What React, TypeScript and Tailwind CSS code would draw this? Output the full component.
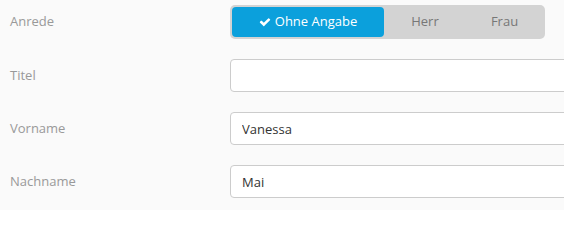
const font = { fontFamily: '"Open Sans", "Noto Sans", sans-serif' };

function CheckIcon() {
  return (
    <svg viewBox="0 0 1792 1792" className="h-[12px] w-[12px]" fill="currentColor">
      <path d="M1671 566q0 40-28 68l-724 724-136 136q-28 28-68 28t-68-28l-136-136-362-362q-28-28-28-68t28-68l136-136q28-28 68-28t68 28l294 295 656-657q28-28 68-28t68 28l136 136q28 28 28 68z" />
    </svg>
  );
}

function Row({ label, children, tall }: { label: string; children: React.ReactNode; tall?: boolean }) {
  return (
    <div className={tall ? 'flex h-[54px] items-center' : 'flex h-[53px] items-center'}>
      <div className="w-[230px] shrink-0 pl-[10px] text-[13px] text-[#999]">{label}</div>
      <div className="min-w-0 shrink-0">{children}</div>
    </div>
  );
}

function TextInput({ value }: { value: string }) {
  return (
    <input
      readOnly
      value={value}
      style={font}
      className="block h-[33px] w-[400px] rounded-[4px] border border-[#ccc] bg-white px-[11px] text-[13px] text-[#333] outline-none"
    />
  );
}

export default function App() {
  return (
    <div style={font} className="h-[210px] w-[564px] overflow-hidden bg-[#fafafa]">
      <div className="-mt-[5px]">
        <Row label="Anrede" tall>
          <div className="flex h-[34px] w-[315px] rounded-[5px] bg-[#d3d3d3] p-[2px] text-[13px]">
            <div className="flex w-[152px] items-center justify-center gap-[4px] rounded-[4px] bg-[#0ba0dc] text-white">
              <CheckIcon />
              <span>Ohne Angabe</span>
            </div>
            <div className="flex w-[82px] items-center justify-center text-[#777]">Herr</div>
            <div className="flex flex-1 items-center justify-center text-[#777]">Frau</div>
          </div>
        </Row>
        <Row label="Titel">
          <TextInput value="" />
        </Row>
        <Row label="Vorname">
          <TextInput value="Vanessa" />
        </Row>
        <Row label="Nachname">
          <TextInput value="Mai" />
        </Row>
      </div>
    </div>
  );
}
